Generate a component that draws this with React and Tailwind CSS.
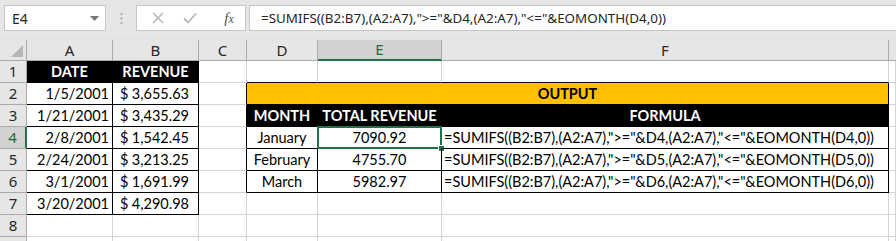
import React from "react";

const CELL_FONT = { fontFamily: "Lato, 'Liberation Sans', sans-serif" };
const UI_FONT = { fontFamily: "'Noto Sans', 'Open Sans', sans-serif" };

const cols = ["A", "B", "C", "D", "E", "F"];

function ColHeader({ label, selected }) {
  return (
    <div
      className={
        "flex items-center justify-center text-[15px] " +
        (selected
          ? "bg-[#d2d2d2] text-[#1e6b40] border-b-2 border-b-[#217346] border-r border-r-[#ababab]"
          : "bg-[#e6e6e6] text-[#262626] border-b border-b-[#ababab] border-r border-r-[#ababab]")
      }
      style={UI_FONT}
    >
      {label}
    </div>
  );
}

function RowHeader({ n, selected }) {
  return (
    <div
      className={
        "flex items-center justify-center text-[15px] " +
        (selected
          ? "bg-[#d2d2d2] text-[#1e6b40] border-r-2 border-r-[#217346] border-b border-b-[#ababab]"
          : "bg-[#e6e6e6] text-[#262626] border-r border-r-[#ababab] border-b border-b-[#ababab]")
      }
      style={UI_FONT}
    >
      {n}
    </div>
  );
}

function Cell({ children, className = "", rb = "gray", bb = "gray", extra = null }) {
  const r = rb === "black" ? "border-r-black" : "border-r-[#d4d4d4]";
  const b = bb === "black" ? "border-b-black" : "border-b-[#d4d4d4]";
  return (
    <div
      className={"relative flex items-center border-r border-b text-[14.5px] text-black whitespace-nowrap overflow-visible " + r + " " + b + " " + className}
      style={CELL_FONT}
    >
      {children}
      {extra}
    </div>
  );
}

const leftData = [
  ["1/5/2001", "3,655.63"],
  ["1/21/2001", "3,435.29"],
  ["2/8/2001", "1,542.45"],
  ["2/24/2001", "3,213.25"],
  ["3/1/2001", "1,691.99"],
  ["3/20/2001", "4,290.98"],
];

const outData = [
  ["January", "7090.92", "D4"],
  ["February", "4755.70", "D5"],
  ["March", "5982.97", "D6"],
];

function formula(ref) {
  return '=SUMIFS((B2:B7),(A2:A7),">="&' + ref + ',(A2:A7),"<="&EOMONTH(' + ref + ',0))';
}

export default function App() {
  const rows = [];
  for (let r = 1; r <= 9; r++) {
    const cells = [];
    cells.push(<RowHeader key={"h" + r} n={r === 9 ? "" : r} selected={r === 4} />);
    if (r === 1) {
      cells.push(
        <Cell key="A" rb="black" bb="black" className="bg-black text-white font-bold justify-center">
          DATE
        </Cell>
      );
      cells.push(
        <Cell key="B" rb="black" bb="black" className="bg-black text-white font-bold justify-center">
          REVENUE
        </Cell>
      );
    } else if (r >= 2 && r <= 7) {
      const d = leftData[r - 2];
      cells.push(
        <Cell key="A" rb="black" bb="black" className="justify-end pr-[3px]">
          {d[0]}
        </Cell>
      );
      cells.push(
        <Cell key="B" rb="black" bb="black" className="justify-between pl-[7px] pr-[9px]">
          <span>$</span>
          <span>{d[1]}</span>
        </Cell>
      );
    } else {
      cells.push(<Cell key="A" />);
      cells.push(<Cell key="B" />);
    }
    cells.push(<Cell key="C" rb={r >= 2 && r <= 6 ? "black" : "gray"} />);
    if (r === 1) {
      cells.push(<Cell key="D" bb="black" />);
      cells.push(<Cell key="E" bb="black" />);
      cells.push(<Cell key="F" bb="black" />);
    } else if (r === 2) {
      cells.push(
        <Cell key="D" rb="black" bb="black" className="col-span-3 bg-[#ffc000] font-bold justify-center">
          OUTPUT
        </Cell>
      );
    } else if (r === 3) {
      cells.push(
        <Cell key="D" rb="black" bb="black" className="bg-black text-white font-bold justify-center">
          MONTH
        </Cell>
      );
      cells.push(
        <Cell key="E" rb="black" bb="black" className="bg-black text-white font-bold justify-center">
          TOTAL REVENUE
        </Cell>
      );
      cells.push(
        <Cell key="F" rb="black" bb="black" className="bg-black text-white font-bold justify-center">
          FORMULA
        </Cell>
      );
    } else if (r >= 4 && r <= 6) {
      const d = outData[r - 4];
      cells.push(
        <Cell key="D" rb="black" bb="black" className="justify-center">
          {d[0]}
        </Cell>
      );
      cells.push(
        <Cell
          key="E"
          rb="black"
          bb="black"
          className="justify-center"
          extra={
            r === 4 ? (
              <>
                <div className="absolute -left-px -top-px -right-px -bottom-px border-2 border-[#217346] pointer-events-none" />
                <div className="absolute -right-[4px] -bottom-[4px] w-[7px] h-[7px] bg-[#217346] border border-white" />
              </>
            ) : null
          }
        >
          {d[1]}
        </Cell>
      );
      cells.push(
        <Cell key="F" rb="black" bb="black" className="justify-start pl-[2px]">
          {formula(d[2])}
        </Cell>
      );
    } else {
      cells.push(<Cell key="D" />);
      cells.push(<Cell key="E" />);
      cells.push(<Cell key="F" />);
    }
    cells.push(<Cell key="G" />);
    rows.push(...cells.map((c, i) => React.cloneElement(c, { key: r + "-" + i })));
  }

  return (
    <div className="w-[896px] h-[241px] overflow-hidden bg-white">
      <div className="h-[40px] bg-[#e6e6e6] flex items-start pt-[5px] pl-[4px] border-b border-[#e1e1e1]">
        <div
          className="w-[102px] h-[26px] bg-white border border-[#c6c6c6] flex items-center justify-between pl-[7px] pr-[6px] text-[14px] text-[#262626]"
          style={UI_FONT}
        >
          <span>E4</span>
          <svg width="9" height="5" viewBox="0 0 9 5">
            <path d="M0 0 L9 0 L4.5 5 Z" fill="#777" />
          </svg>
        </div>
        <div className="w-[30px] h-[26px] flex items-center justify-center">
          <svg width="3" height="13" viewBox="0 0 3 13">
            <rect x="0.5" y="1" width="2" height="2" fill="#b0b0b0" />
            <rect x="0.5" y="5.5" width="2" height="2" fill="#b0b0b0" />
            <rect x="0.5" y="10" width="2" height="2" fill="#b0b0b0" />
          </svg>
        </div>
        <div className="w-[110px] h-[26px] bg-white border border-[#c6c6c6] flex items-center">
          <div className="w-[38px] flex justify-center pl-[4px]">
            <svg width="12" height="12" viewBox="0 0 12 12">
              <path d="M1 1 L11 11 M11 1 L1 11" stroke="#b8b8b8" strokeWidth="1.6" fill="none" />
            </svg>
          </div>
          <div className="w-[30px] flex justify-center">
            <svg width="14" height="12" viewBox="0 0 14 12">
              <path d="M1 6.5 L5 10.5 L13 1.5" stroke="#b8b8b8" strokeWidth="1.8" fill="none" />
            </svg>
          </div>
          <div
            className="flex-1 flex justify-center pl-[8px] text-[15px] italic text-[#555]"
            style={{ fontFamily: "'Liberation Serif', serif" }}
          >
            <span>f</span>
            <span className="text-[12px] self-end mb-[1px]">x</span>
          </div>
        </div>
        <div
          className="ml-[3px] flex-1 h-[26px] bg-white border border-r-0 border-[#c6c6c6] flex items-center pl-[11px] text-[13.4px] text-[#262626] whitespace-nowrap"
          style={UI_FONT}
        >
          {'=SUMIFS((B2:B7),(A2:A7),">="&D4,(A2:A7),"<="&EOMONTH(D4,0))'}
        </div>
      </div>
      <div className="grid grid-cols-[27px_86px_86px_48px_71px_124px_447px_1fr] grid-rows-[21px_repeat(9,22px)]">
        <div className="relative bg-[#e6e6e6] border-r border-b border-[#ababab]">
          <svg className="absolute right-[3px] bottom-[3px]" width="12" height="12" viewBox="0 0 12 12">
            <path d="M12 0 L12 12 L0 12 Z" fill="#b6b6b6" />
          </svg>
        </div>
        {cols.map((c) => (
          <ColHeader key={c} label={c} selected={c === "E"} />
        ))}
        <div className="bg-[#e6e6e6] border-b border-[#ababab]" />
        {rows}
      </div>
    </div>
  );
}
